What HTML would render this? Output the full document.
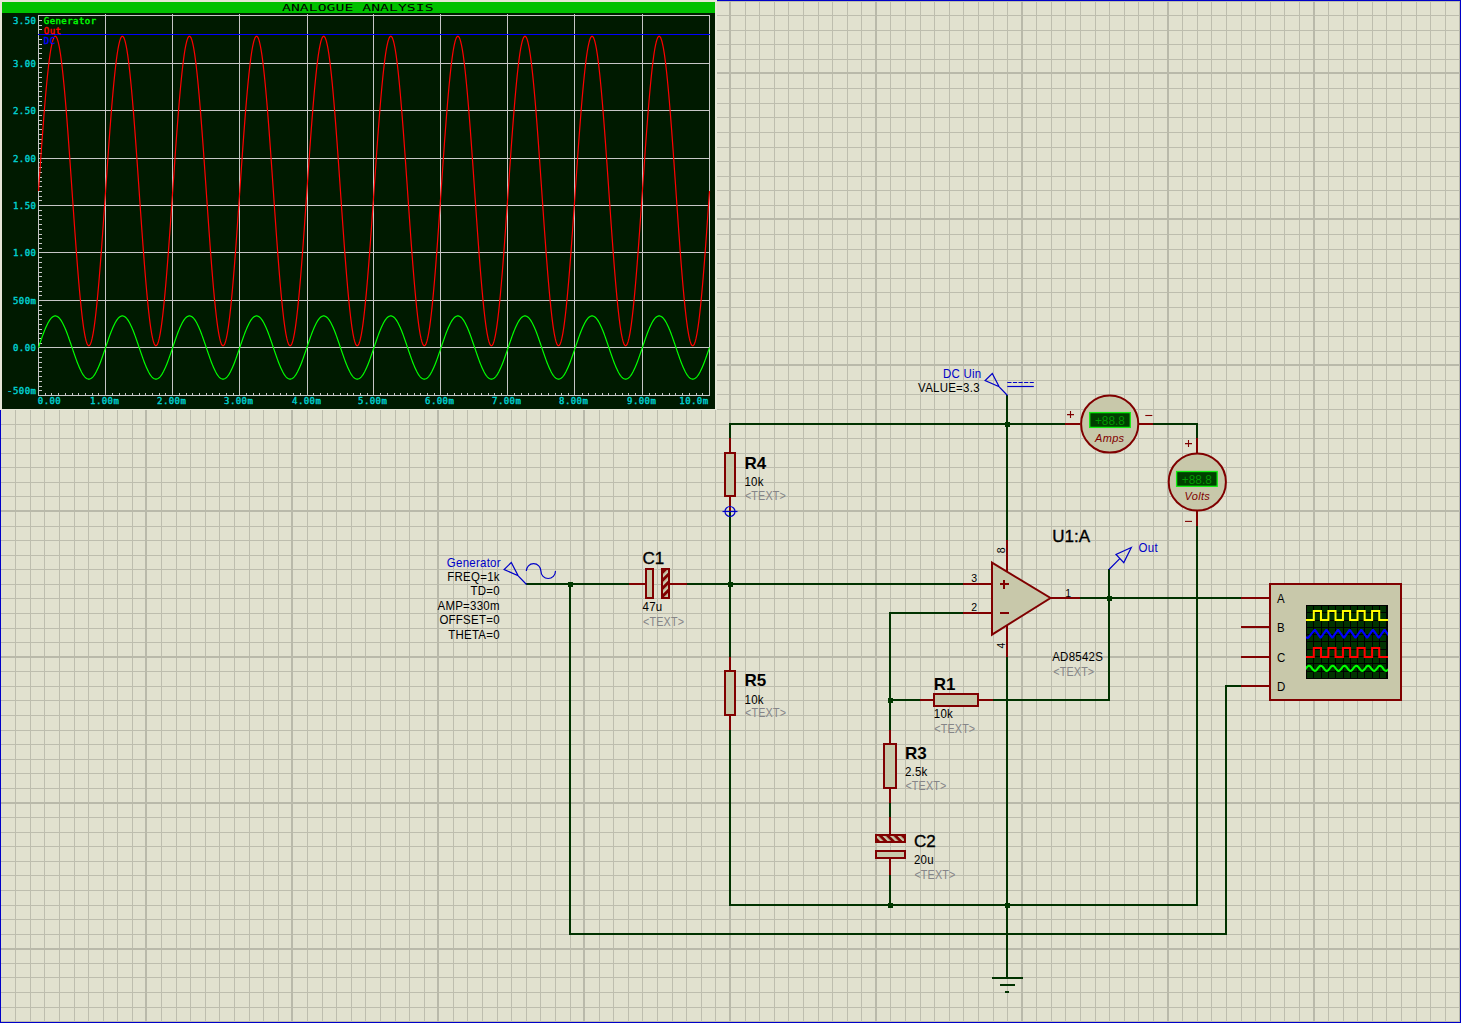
<!DOCTYPE html>
<html lang="en"><head><meta charset="utf-8"><title>Schematic - Analogue Analysis</title>
<style>html,body{margin:0;padding:0;background:#e1e1cf;overflow:hidden}svg{display:block}
text{font-family:"Liberation Sans","DejaVu Sans",sans-serif;font-size:12.6px;letter-spacing:0.27px;fill:#000}
.m{font-family:"DejaVu Sans Mono","Liberation Mono",monospace;font-size:9px;letter-spacing:0.44px;stroke-width:0.4px}
.ref{font-size:17px;letter-spacing:0;stroke:#000;stroke-width:0.35px}.rb{font-weight:bold;stroke:none}.tx{fill:#858588;font-size:12px;letter-spacing:0.15px}.bl{fill:#0000c8}
.w{stroke:#003200;stroke-width:2;fill:none;stroke-linecap:butt;stroke-linejoin:miter}.p{stroke:#800000;stroke-width:2;fill:none}
.b{stroke:#800000;stroke-width:2;fill:#c8c8aa}.pr{stroke:#0000c8;stroke-width:1.2;fill:none}
.pn{font-size:10.5px;letter-spacing:0}.mt{fill:#800000;font-style:italic;font-size:11px;letter-spacing:0.3px}
.cy{fill:#00d0d0;stroke:#00d0d0}
</style></head><body>
<svg width="1461" height="1023" viewBox="0 0 1461 1023">
<defs><pattern id="hatch" width="5.66" height="5.66" patternUnits="userSpaceOnUse" patternTransform="rotate(-45)"><rect width="5.66" height="5.66" fill="#c8c8aa"/><rect width="5.66" height="3" fill="#800000"/></pattern><pattern id="hatch2" width="5.3" height="5.3" patternUnits="userSpaceOnUse" patternTransform="translate(1.5 0) rotate(45)"><rect width="5.3" height="5.3" fill="#c8c8aa"/><rect width="5.3" height="2.9" fill="#800000"/></pattern></defs>
<rect width="1461" height="1023" fill="#e1e1cf"/>
<g shape-rendering="crispEdges">
<path d="M15.5 0V1023M30.5 0V1023M44.5 0V1023M59.5 0V1023M74.5 0V1023M88.5 0V1023M103.5 0V1023M117.5 0V1023M132.5 0V1023M161.5 0V1023M176.5 0V1023M190.5 0V1023M205.5 0V1023M219.5 0V1023M234.5 0V1023M249.5 0V1023M263.5 0V1023M278.5 0V1023M307.5 0V1023M322.5 0V1023M336.5 0V1023M351.5 0V1023M365.5 0V1023M380.5 0V1023M395.5 0V1023M409.5 0V1023M424.5 0V1023M453.5 0V1023M467.5 0V1023M482.5 0V1023M497.5 0V1023M511.5 0V1023M526.5 0V1023M540.5 0V1023M555.5 0V1023M570.5 0V1023M599.5 0V1023M613.5 0V1023M628.5 0V1023M642.5 0V1023M657.5 0V1023M672.5 0V1023M686.5 0V1023M701.5 0V1023M715.5 0V1023M745.5 0V1023M759.5 0V1023M774.5 0V1023M788.5 0V1023M803.5 0V1023M818.5 0V1023M832.5 0V1023M847.5 0V1023M861.5 0V1023M890.5 0V1023M905.5 0V1023M920.5 0V1023M934.5 0V1023M949.5 0V1023M963.5 0V1023M978.5 0V1023M993.5 0V1023M1007.5 0V1023M1036.5 0V1023M1051.5 0V1023M1065.5 0V1023M1080.5 0V1023M1095.5 0V1023M1109.5 0V1023M1124.5 0V1023M1138.5 0V1023M1153.5 0V1023M1182.5 0V1023M1197.5 0V1023M1211.5 0V1023M1226.5 0V1023M1241.5 0V1023M1255.5 0V1023M1270.5 0V1023M1284.5 0V1023M1299.5 0V1023M1328.5 0V1023M1343.5 0V1023M1357.5 0V1023M1372.5 0V1023M1386.5 0V1023M1401.5 0V1023M1416.5 0V1023M1430.5 0V1023M1445.5 0V1023M0 1.5H1461M0 15.5H1461M0 30.5H1461M0 44.5H1461M0 59.5H1461M0 88.5H1461M0 103.5H1461M0 117.5H1461M0 132.5H1461M0 147.5H1461M0 161.5H1461M0 176.5H1461M0 190.5H1461M0 205.5H1461M0 234.5H1461M0 249.5H1461M0 263.5H1461M0 278.5H1461M0 292.5H1461M0 307.5H1461M0 321.5H1461M0 336.5H1461M0 351.5H1461M0 380.5H1461M0 394.5H1461M0 409.5H1461M0 424.5H1461M0 438.5H1461M0 453.5H1461M0 467.5H1461M0 482.5H1461M0 496.5H1461M0 526.5H1461M0 540.5H1461M0 555.5H1461M0 569.5H1461M0 584.5H1461M0 598.5H1461M0 613.5H1461M0 628.5H1461M0 642.5H1461M0 671.5H1461M0 686.5H1461M0 700.5H1461M0 715.5H1461M0 730.5H1461M0 744.5H1461M0 759.5H1461M0 773.5H1461M0 788.5H1461M0 817.5H1461M0 832.5H1461M0 846.5H1461M0 861.5H1461M0 875.5H1461M0 890.5H1461M0 905.5H1461M0 919.5H1461M0 934.5H1461M0 963.5H1461M0 977.5H1461M0 992.5H1461M0 1007.5H1461M0 1021.5H1461" stroke="#bdbdae" stroke-width="1" fill="none"/>
<path d="M0 0V1023M146 0V1023M292 0V1023M438 0V1023M584 0V1023M730 0V1023M876 0V1023M1022 0V1023M1168 0V1023M1314 0V1023M1460 0V1023M0 73H1461M0 219H1461M0 365H1461M0 511H1461M0 657H1461M0 803H1461M0 949H1461" stroke="#b9b9aa" stroke-width="2" fill="none"/>
<path d="M0.5 0V1022.5H1460.5V0.5H0" stroke="#0000c8" stroke-width="1" fill="none"/>
</g>
<g id="graph">
<g shape-rendering="crispEdges">
<rect x="0" y="0" width="717" height="410" fill="#e6e6d8"/>
<rect x="2" y="2" width="713" height="407" fill="#001a00"/>
<rect x="2" y="2" width="713" height="11" fill="#00c000"/>
<path d="M38.5 15V396M105.5 14V396M172.5 14V396M239.5 14V396M307.5 14V396M373.5 14V396M440.5 14V396M507.5 14V396M574.5 14V396M642.5 14V396M709.5 15V396M38 15.5H710M38 63.5H710M38 110.5H710M38 158.5H710M38 205.5H710M38 252.5H710M38 300.5H710M38 347.5H710M38 395.5H710M45.5 395v-2.5M51.5 395v-2.5M58.5 395v-2.5M65.5 395v-2.5M72.5 395v-2.5M78.5 395v-2.5M85.5 395v-2.5M92.5 395v-2.5M98.5 395v-2.5M112.5 395v-2.5M119.5 395v-2.5M125.5 395v-2.5M132.5 395v-2.5M139.5 395v-2.5M145.5 395v-2.5M152.5 395v-2.5M159.5 395v-2.5M165.5 395v-2.5M179.5 395v-2.5M186.5 395v-2.5M192.5 395v-2.5M199.5 395v-2.5M206.5 395v-2.5M212.5 395v-2.5M219.5 395v-2.5M226.5 395v-2.5M233.5 395v-2.5M246.5 395v-2.5M253.5 395v-2.5M259.5 395v-2.5M266.5 395v-2.5M273.5 395v-2.5M280.5 395v-2.5M286.5 395v-2.5M293.5 395v-2.5M300.5 395v-2.5M313.5 395v-2.5M320.5 395v-2.5M327.5 395v-2.5M333.5 395v-2.5M340.5 395v-2.5M347.5 395v-2.5M353.5 395v-2.5M360.5 395v-2.5M367.5 395v-2.5M380.5 395v-2.5M387.5 395v-2.5M394.5 395v-2.5M400.5 395v-2.5M407.5 395v-2.5M414.5 395v-2.5M420.5 395v-2.5M427.5 395v-2.5M434.5 395v-2.5M447.5 395v-2.5M454.5 395v-2.5M461.5 395v-2.5M467.5 395v-2.5M474.5 395v-2.5M481.5 395v-2.5M488.5 395v-2.5M494.5 395v-2.5M501.5 395v-2.5M514.5 395v-2.5M521.5 395v-2.5M528.5 395v-2.5M535.5 395v-2.5M541.5 395v-2.5M548.5 395v-2.5M555.5 395v-2.5M561.5 395v-2.5M568.5 395v-2.5M582.5 395v-2.5M588.5 395v-2.5M595.5 395v-2.5M602.5 395v-2.5M608.5 395v-2.5M615.5 395v-2.5M622.5 395v-2.5M628.5 395v-2.5M635.5 395v-2.5M649.5 395v-2.5M655.5 395v-2.5M662.5 395v-2.5M669.5 395v-2.5M675.5 395v-2.5M682.5 395v-2.5M689.5 395v-2.5M696.5 395v-2.5M702.5 395v-2.5M39 20.5h2.5M39 25.5h2.5M39 29.5h2.5M39 34.5h2.5M39 39.5h2.5M39 44.5h2.5M39 48.5h2.5M39 53.5h2.5M39 58.5h2.5M39 67.5h2.5M39 72.5h2.5M39 77.5h2.5M39 82.5h2.5M39 86.5h2.5M39 91.5h2.5M39 96.5h2.5M39 101.5h2.5M39 105.5h2.5M39 115.5h2.5M39 120.5h2.5M39 124.5h2.5M39 129.5h2.5M39 134.5h2.5M39 139.5h2.5M39 143.5h2.5M39 148.5h2.5M39 153.5h2.5M39 162.5h2.5M39 167.5h2.5M39 172.5h2.5M39 177.5h2.5M39 181.5h2.5M39 186.5h2.5M39 191.5h2.5M39 196.5h2.5M39 200.5h2.5M39 210.5h2.5M39 215.5h2.5M39 219.5h2.5M39 224.5h2.5M39 229.5h2.5M39 234.5h2.5M39 238.5h2.5M39 243.5h2.5M39 248.5h2.5M39 257.5h2.5M39 262.5h2.5M39 267.5h2.5M39 272.5h2.5M39 276.5h2.5M39 281.5h2.5M39 286.5h2.5M39 291.5h2.5M39 295.5h2.5M39 305.5h2.5M39 310.5h2.5M39 314.5h2.5M39 319.5h2.5M39 324.5h2.5M39 329.5h2.5M39 333.5h2.5M39 338.5h2.5M39 343.5h2.5M39 352.5h2.5M39 357.5h2.5M39 362.5h2.5M39 367.5h2.5M39 371.5h2.5M39 376.5h2.5M39 381.5h2.5M39 386.5h2.5M39 390.5h2.5" stroke="#c6c6c6" stroke-width="1" fill="none"/>
</g>
<polyline points="38.5,347.5 38.98,346.08 39.46,344.67 39.94,343.26 40.42,341.86 40.9,340.47 41.38,339.1 41.85,337.74 42.33,336.4 42.81,335.09 43.29,333.8 43.77,332.53 44.25,331.3 44.73,330.1 45.21,328.93 45.69,327.81 46.17,326.72 46.65,325.67 47.13,324.67 47.61,323.71 48.09,322.81 48.56,321.95 49.04,321.14 49.52,320.39 50,319.69 50.48,319.04 50.96,318.46 51.44,317.93 51.92,317.46 52.4,317.05 52.88,316.71 53.36,316.42 53.84,316.2 54.32,316.04 54.8,315.95 55.27,315.91 55.75,315.95 56.23,316.04 56.71,316.2 57.19,316.42 57.67,316.71 58.15,317.05 58.63,317.46 59.11,317.93 59.59,318.46 60.07,319.04 60.55,319.69 61.03,320.39 61.51,321.14 61.98,321.95 62.46,322.81 62.94,323.71 63.42,324.67 63.9,325.67 64.38,326.72 64.86,327.81 65.34,328.93 65.82,330.1 66.3,331.3 66.78,332.53 67.26,333.8 67.74,335.09 68.22,336.4 68.69,337.74 69.17,339.1 69.65,340.47 70.13,341.86 70.61,343.26 71.09,344.67 71.57,346.08 72.05,347.5 72.53,348.92 73.01,350.33 73.49,351.74 73.97,353.14 74.45,354.53 74.93,355.9 75.41,357.26 75.88,358.6 76.36,359.91 76.84,361.2 77.32,362.47 77.8,363.7 78.28,364.9 78.76,366.07 79.24,367.19 79.72,368.28 80.2,369.33 80.68,370.33 81.16,371.29 81.64,372.19 82.11,373.05 82.59,373.86 83.07,374.61 83.55,375.31 84.03,375.96 84.51,376.54 84.99,377.07 85.47,377.54 85.95,377.95 86.43,378.29 86.91,378.58 87.39,378.8 87.87,378.96 88.35,379.05 88.82,379.09 89.3,379.05 89.78,378.96 90.26,378.8 90.74,378.58 91.22,378.29 91.7,377.95 92.18,377.54 92.66,377.07 93.14,376.54 93.62,375.96 94.1,375.31 94.58,374.61 95.06,373.86 95.53,373.05 96.01,372.19 96.49,371.29 96.97,370.33 97.45,369.33 97.93,368.28 98.41,367.19 98.89,366.07 99.37,364.9 99.85,363.7 100.33,362.47 100.81,361.2 101.29,359.91 101.77,358.6 102.24,357.26 102.72,355.9 103.2,354.53 103.68,353.14 104.16,351.74 104.64,350.33 105.12,348.92 105.6,347.5 106.08,346.08 106.56,344.67 107.04,343.26 107.52,341.86 108,340.47 108.48,339.1 108.95,337.74 109.43,336.4 109.91,335.09 110.39,333.8 110.87,332.53 111.35,331.3 111.83,330.1 112.31,328.93 112.79,327.81 113.27,326.72 113.75,325.67 114.23,324.67 114.71,323.71 115.19,322.81 115.66,321.95 116.14,321.14 116.62,320.39 117.1,319.69 117.58,319.04 118.06,318.46 118.54,317.93 119.02,317.46 119.5,317.05 119.98,316.71 120.46,316.42 120.94,316.2 121.42,316.04 121.9,315.95 122.38,315.91 122.85,315.95 123.33,316.04 123.81,316.2 124.29,316.42 124.77,316.71 125.25,317.05 125.73,317.46 126.21,317.93 126.69,318.46 127.17,319.04 127.65,319.69 128.13,320.39 128.61,321.14 129.08,321.95 129.56,322.81 130.04,323.71 130.52,324.67 131,325.67 131.48,326.72 131.96,327.81 132.44,328.93 132.92,330.1 133.4,331.3 133.88,332.53 134.36,333.8 134.84,335.09 135.32,336.4 135.79,337.74 136.27,339.1 136.75,340.47 137.23,341.86 137.71,343.26 138.19,344.67 138.67,346.08 139.15,347.5 139.63,348.92 140.11,350.33 140.59,351.74 141.07,353.14 141.55,354.53 142.03,355.9 142.5,357.26 142.98,358.6 143.46,359.91 143.94,361.2 144.42,362.47 144.9,363.7 145.38,364.9 145.86,366.07 146.34,367.19 146.82,368.28 147.3,369.33 147.78,370.33 148.26,371.29 148.74,372.19 149.21,373.05 149.69,373.86 150.17,374.61 150.65,375.31 151.13,375.96 151.61,376.54 152.09,377.07 152.57,377.54 153.05,377.95 153.53,378.29 154.01,378.58 154.49,378.8 154.97,378.96 155.45,379.05 155.92,379.09 156.4,379.05 156.88,378.96 157.36,378.8 157.84,378.58 158.32,378.29 158.8,377.95 159.28,377.54 159.76,377.07 160.24,376.54 160.72,375.96 161.2,375.31 161.68,374.61 162.16,373.86 162.63,373.05 163.11,372.19 163.59,371.29 164.07,370.33 164.55,369.33 165.03,368.28 165.51,367.19 165.99,366.07 166.47,364.9 166.95,363.7 167.43,362.47 167.91,361.2 168.39,359.91 168.87,358.6 169.34,357.26 169.82,355.9 170.3,354.53 170.78,353.14 171.26,351.74 171.74,350.33 172.22,348.92 172.7,347.5 173.18,346.08 173.66,344.67 174.14,343.26 174.62,341.86 175.1,340.47 175.58,339.1 176.05,337.74 176.53,336.4 177.01,335.09 177.49,333.8 177.97,332.53 178.45,331.3 178.93,330.1 179.41,328.93 179.89,327.81 180.37,326.72 180.85,325.67 181.33,324.67 181.81,323.71 182.29,322.81 182.76,321.95 183.24,321.14 183.72,320.39 184.2,319.69 184.68,319.04 185.16,318.46 185.64,317.93 186.12,317.46 186.6,317.05 187.08,316.71 187.56,316.42 188.04,316.2 188.52,316.04 189,315.95 189.47,315.91 189.95,315.95 190.43,316.04 190.91,316.2 191.39,316.42 191.87,316.71 192.35,317.05 192.83,317.46 193.31,317.93 193.79,318.46 194.27,319.04 194.75,319.69 195.23,320.39 195.71,321.14 196.19,321.95 196.66,322.81 197.14,323.71 197.62,324.67 198.1,325.67 198.58,326.72 199.06,327.81 199.54,328.93 200.02,330.1 200.5,331.3 200.98,332.53 201.46,333.8 201.94,335.09 202.42,336.4 202.9,337.74 203.37,339.1 203.85,340.47 204.33,341.86 204.81,343.26 205.29,344.67 205.77,346.08 206.25,347.5 206.73,348.92 207.21,350.33 207.69,351.74 208.17,353.14 208.65,354.53 209.13,355.9 209.6,357.26 210.08,358.6 210.56,359.91 211.04,361.2 211.52,362.47 212,363.7 212.48,364.9 212.96,366.07 213.44,367.19 213.92,368.28 214.4,369.33 214.88,370.33 215.36,371.29 215.84,372.19 216.31,373.05 216.79,373.86 217.27,374.61 217.75,375.31 218.23,375.96 218.71,376.54 219.19,377.07 219.67,377.54 220.15,377.95 220.63,378.29 221.11,378.58 221.59,378.8 222.07,378.96 222.55,379.05 223.02,379.09 223.5,379.05 223.98,378.96 224.46,378.8 224.94,378.58 225.42,378.29 225.9,377.95 226.38,377.54 226.86,377.07 227.34,376.54 227.82,375.96 228.3,375.31 228.78,374.61 229.26,373.86 229.73,373.05 230.21,372.19 230.69,371.29 231.17,370.33 231.65,369.33 232.13,368.28 232.61,367.19 233.09,366.07 233.57,364.9 234.05,363.7 234.53,362.47 235.01,361.2 235.49,359.91 235.97,358.6 236.44,357.26 236.92,355.9 237.4,354.53 237.88,353.14 238.36,351.74 238.84,350.33 239.32,348.92 239.8,347.5 240.28,346.08 240.76,344.67 241.24,343.26 241.72,341.86 242.2,340.47 242.68,339.1 243.15,337.74 243.63,336.4 244.11,335.09 244.59,333.8 245.07,332.53 245.55,331.3 246.03,330.1 246.51,328.93 246.99,327.81 247.47,326.72 247.95,325.67 248.43,324.67 248.91,323.71 249.39,322.81 249.86,321.95 250.34,321.14 250.82,320.39 251.3,319.69 251.78,319.04 252.26,318.46 252.74,317.93 253.22,317.46 253.7,317.05 254.18,316.71 254.66,316.42 255.14,316.2 255.62,316.04 256.1,315.95 256.57,315.91 257.05,315.95 257.53,316.04 258.01,316.2 258.49,316.42 258.97,316.71 259.45,317.05 259.93,317.46 260.41,317.93 260.89,318.46 261.37,319.04 261.85,319.69 262.33,320.39 262.81,321.14 263.28,321.95 263.76,322.81 264.24,323.71 264.72,324.67 265.2,325.67 265.68,326.72 266.16,327.81 266.64,328.93 267.12,330.1 267.6,331.3 268.08,332.53 268.56,333.8 269.04,335.09 269.52,336.4 270,337.74 270.47,339.1 270.95,340.47 271.43,341.86 271.91,343.26 272.39,344.67 272.87,346.08 273.35,347.5 273.83,348.92 274.31,350.33 274.79,351.74 275.27,353.14 275.75,354.53 276.23,355.9 276.7,357.26 277.18,358.6 277.66,359.91 278.14,361.2 278.62,362.47 279.1,363.7 279.58,364.9 280.06,366.07 280.54,367.19 281.02,368.28 281.5,369.33 281.98,370.33 282.46,371.29 282.94,372.19 283.41,373.05 283.89,373.86 284.37,374.61 284.85,375.31 285.33,375.96 285.81,376.54 286.29,377.07 286.77,377.54 287.25,377.95 287.73,378.29 288.21,378.58 288.69,378.8 289.17,378.96 289.65,379.05 290.12,379.09 290.6,379.05 291.08,378.96 291.56,378.8 292.04,378.58 292.52,378.29 293,377.95 293.48,377.54 293.96,377.07 294.44,376.54 294.92,375.96 295.4,375.31 295.88,374.61 296.36,373.86 296.83,373.05 297.31,372.19 297.79,371.29 298.27,370.33 298.75,369.33 299.23,368.28 299.71,367.19 300.19,366.07 300.67,364.9 301.15,363.7 301.63,362.47 302.11,361.2 302.59,359.91 303.07,358.6 303.55,357.26 304.02,355.9 304.5,354.53 304.98,353.14 305.46,351.74 305.94,350.33 306.42,348.92 306.9,347.5 307.38,346.08 307.86,344.67 308.34,343.26 308.82,341.86 309.3,340.47 309.78,339.1 310.25,337.74 310.73,336.4 311.21,335.09 311.69,333.8 312.17,332.53 312.65,331.3 313.13,330.1 313.61,328.93 314.09,327.81 314.57,326.72 315.05,325.67 315.53,324.67 316.01,323.71 316.49,322.81 316.96,321.95 317.44,321.14 317.92,320.39 318.4,319.69 318.88,319.04 319.36,318.46 319.84,317.93 320.32,317.46 320.8,317.05 321.28,316.71 321.76,316.42 322.24,316.2 322.72,316.04 323.2,315.95 323.67,315.91 324.15,315.95 324.63,316.04 325.11,316.2 325.59,316.42 326.07,316.71 326.55,317.05 327.03,317.46 327.51,317.93 327.99,318.46 328.47,319.04 328.95,319.69 329.43,320.39 329.91,321.14 330.38,321.95 330.86,322.81 331.34,323.71 331.82,324.67 332.3,325.67 332.78,326.72 333.26,327.81 333.74,328.93 334.22,330.1 334.7,331.3 335.18,332.53 335.66,333.8 336.14,335.09 336.62,336.4 337.09,337.74 337.57,339.1 338.05,340.47 338.53,341.86 339.01,343.26 339.49,344.67 339.97,346.08 340.45,347.5 340.93,348.92 341.41,350.33 341.89,351.74 342.37,353.14 342.85,354.53 343.33,355.9 343.8,357.26 344.28,358.6 344.76,359.91 345.24,361.2 345.72,362.47 346.2,363.7 346.68,364.9 347.16,366.07 347.64,367.19 348.12,368.28 348.6,369.33 349.08,370.33 349.56,371.29 350.04,372.19 350.51,373.05 350.99,373.86 351.47,374.61 351.95,375.31 352.43,375.96 352.91,376.54 353.39,377.07 353.87,377.54 354.35,377.95 354.83,378.29 355.31,378.58 355.79,378.8 356.27,378.96 356.75,379.05 357.22,379.09 357.7,379.05 358.18,378.96 358.66,378.8 359.14,378.58 359.62,378.29 360.1,377.95 360.58,377.54 361.06,377.07 361.54,376.54 362.02,375.96 362.5,375.31 362.98,374.61 363.46,373.86 363.93,373.05 364.41,372.19 364.89,371.29 365.37,370.33 365.85,369.33 366.33,368.28 366.81,367.19 367.29,366.07 367.77,364.9 368.25,363.7 368.73,362.47 369.21,361.2 369.69,359.91 370.17,358.6 370.64,357.26 371.12,355.9 371.6,354.53 372.08,353.14 372.56,351.74 373.04,350.33 373.52,348.92 374,347.5 374.48,346.08 374.96,344.67 375.44,343.26 375.92,341.86 376.4,340.47 376.88,339.1 377.35,337.74 377.83,336.4 378.31,335.09 378.79,333.8 379.27,332.53 379.75,331.3 380.23,330.1 380.71,328.93 381.19,327.81 381.67,326.72 382.15,325.67 382.63,324.67 383.11,323.71 383.59,322.81 384.06,321.95 384.54,321.14 385.02,320.39 385.5,319.69 385.98,319.04 386.46,318.46 386.94,317.93 387.42,317.46 387.9,317.05 388.38,316.71 388.86,316.42 389.34,316.2 389.82,316.04 390.3,315.95 390.77,315.91 391.25,315.95 391.73,316.04 392.21,316.2 392.69,316.42 393.17,316.71 393.65,317.05 394.13,317.46 394.61,317.93 395.09,318.46 395.57,319.04 396.05,319.69 396.53,320.39 397.01,321.14 397.48,321.95 397.96,322.81 398.44,323.71 398.92,324.67 399.4,325.67 399.88,326.72 400.36,327.81 400.84,328.93 401.32,330.1 401.8,331.3 402.28,332.53 402.76,333.8 403.24,335.09 403.72,336.4 404.19,337.74 404.67,339.1 405.15,340.47 405.63,341.86 406.11,343.26 406.59,344.67 407.07,346.08 407.55,347.5 408.03,348.92 408.51,350.33 408.99,351.74 409.47,353.14 409.95,354.53 410.43,355.9 410.9,357.26 411.38,358.6 411.86,359.91 412.34,361.2 412.82,362.47 413.3,363.7 413.78,364.9 414.26,366.07 414.74,367.19 415.22,368.28 415.7,369.33 416.18,370.33 416.66,371.29 417.14,372.19 417.62,373.05 418.09,373.86 418.57,374.61 419.05,375.31 419.53,375.96 420.01,376.54 420.49,377.07 420.97,377.54 421.45,377.95 421.93,378.29 422.41,378.58 422.89,378.8 423.37,378.96 423.85,379.05 424.32,379.09 424.8,379.05 425.28,378.96 425.76,378.8 426.24,378.58 426.72,378.29 427.2,377.95 427.68,377.54 428.16,377.07 428.64,376.54 429.12,375.96 429.6,375.31 430.08,374.61 430.56,373.86 431.03,373.05 431.51,372.19 431.99,371.29 432.47,370.33 432.95,369.33 433.43,368.28 433.91,367.19 434.39,366.07 434.87,364.9 435.35,363.7 435.83,362.47 436.31,361.2 436.79,359.91 437.27,358.6 437.75,357.26 438.22,355.9 438.7,354.53 439.18,353.14 439.66,351.74 440.14,350.33 440.62,348.92 441.1,347.5 441.58,346.08 442.06,344.67 442.54,343.26 443.02,341.86 443.5,340.47 443.98,339.1 444.45,337.74 444.93,336.4 445.41,335.09 445.89,333.8 446.37,332.53 446.85,331.3 447.33,330.1 447.81,328.93 448.29,327.81 448.77,326.72 449.25,325.67 449.73,324.67 450.21,323.71 450.69,322.81 451.16,321.95 451.64,321.14 452.12,320.39 452.6,319.69 453.08,319.04 453.56,318.46 454.04,317.93 454.52,317.46 455,317.05 455.48,316.71 455.96,316.42 456.44,316.2 456.92,316.04 457.4,315.95 457.87,315.91 458.35,315.95 458.83,316.04 459.31,316.2 459.79,316.42 460.27,316.71 460.75,317.05 461.23,317.46 461.71,317.93 462.19,318.46 462.67,319.04 463.15,319.69 463.63,320.39 464.11,321.14 464.58,321.95 465.06,322.81 465.54,323.71 466.02,324.67 466.5,325.67 466.98,326.72 467.46,327.81 467.94,328.93 468.42,330.1 468.9,331.3 469.38,332.53 469.86,333.8 470.34,335.09 470.82,336.4 471.29,337.74 471.77,339.1 472.25,340.47 472.73,341.86 473.21,343.26 473.69,344.67 474.17,346.08 474.65,347.5 475.13,348.92 475.61,350.33 476.09,351.74 476.57,353.14 477.05,354.53 477.53,355.9 478,357.26 478.48,358.6 478.96,359.91 479.44,361.2 479.92,362.47 480.4,363.7 480.88,364.9 481.36,366.07 481.84,367.19 482.32,368.28 482.8,369.33 483.28,370.33 483.76,371.29 484.24,372.19 484.71,373.05 485.19,373.86 485.67,374.61 486.15,375.31 486.63,375.96 487.11,376.54 487.59,377.07 488.07,377.54 488.55,377.95 489.03,378.29 489.51,378.58 489.99,378.8 490.47,378.96 490.95,379.05 491.42,379.09 491.9,379.05 492.38,378.96 492.86,378.8 493.34,378.58 493.82,378.29 494.3,377.95 494.78,377.54 495.26,377.07 495.74,376.54 496.22,375.96 496.7,375.31 497.18,374.61 497.66,373.86 498.13,373.05 498.61,372.19 499.09,371.29 499.57,370.33 500.05,369.33 500.53,368.28 501.01,367.19 501.49,366.07 501.97,364.9 502.45,363.7 502.93,362.47 503.41,361.2 503.89,359.91 504.37,358.6 504.84,357.26 505.32,355.9 505.8,354.53 506.28,353.14 506.76,351.74 507.24,350.33 507.72,348.92 508.2,347.5 508.68,346.08 509.16,344.67 509.64,343.26 510.12,341.86 510.6,340.47 511.08,339.1 511.55,337.74 512.03,336.4 512.51,335.09 512.99,333.8 513.47,332.53 513.95,331.3 514.43,330.1 514.91,328.93 515.39,327.81 515.87,326.72 516.35,325.67 516.83,324.67 517.31,323.71 517.79,322.81 518.26,321.95 518.74,321.14 519.22,320.39 519.7,319.69 520.18,319.04 520.66,318.46 521.14,317.93 521.62,317.46 522.1,317.05 522.58,316.71 523.06,316.42 523.54,316.2 524.02,316.04 524.5,315.95 524.97,315.91 525.45,315.95 525.93,316.04 526.41,316.2 526.89,316.42 527.37,316.71 527.85,317.05 528.33,317.46 528.81,317.93 529.29,318.46 529.77,319.04 530.25,319.69 530.73,320.39 531.21,321.14 531.68,321.95 532.16,322.81 532.64,323.71 533.12,324.67 533.6,325.67 534.08,326.72 534.56,327.81 535.04,328.93 535.52,330.1 536,331.3 536.48,332.53 536.96,333.8 537.44,335.09 537.92,336.4 538.39,337.74 538.87,339.1 539.35,340.47 539.83,341.86 540.31,343.26 540.79,344.67 541.27,346.08 541.75,347.5 542.23,348.92 542.71,350.33 543.19,351.74 543.67,353.14 544.15,354.53 544.63,355.9 545.11,357.26 545.58,358.6 546.06,359.91 546.54,361.2 547.02,362.47 547.5,363.7 547.98,364.9 548.46,366.07 548.94,367.19 549.42,368.28 549.9,369.33 550.38,370.33 550.86,371.29 551.34,372.19 551.81,373.05 552.29,373.86 552.77,374.61 553.25,375.31 553.73,375.96 554.21,376.54 554.69,377.07 555.17,377.54 555.65,377.95 556.13,378.29 556.61,378.58 557.09,378.8 557.57,378.96 558.05,379.05 558.52,379.09 559,379.05 559.48,378.96 559.96,378.8 560.44,378.58 560.92,378.29 561.4,377.95 561.88,377.54 562.36,377.07 562.84,376.54 563.32,375.96 563.8,375.31 564.28,374.61 564.76,373.86 565.23,373.05 565.71,372.19 566.19,371.29 566.67,370.33 567.15,369.33 567.63,368.28 568.11,367.19 568.59,366.07 569.07,364.9 569.55,363.7 570.03,362.47 570.51,361.2 570.99,359.91 571.47,358.6 571.94,357.26 572.42,355.9 572.9,354.53 573.38,353.14 573.86,351.74 574.34,350.33 574.82,348.92 575.3,347.5 575.78,346.08 576.26,344.67 576.74,343.26 577.22,341.86 577.7,340.47 578.18,339.1 578.65,337.74 579.13,336.4 579.61,335.09 580.09,333.8 580.57,332.53 581.05,331.3 581.53,330.1 582.01,328.93 582.49,327.81 582.97,326.72 583.45,325.67 583.93,324.67 584.41,323.71 584.89,322.81 585.37,321.95 585.84,321.14 586.32,320.39 586.8,319.69 587.28,319.04 587.76,318.46 588.24,317.93 588.72,317.46 589.2,317.05 589.68,316.71 590.16,316.42 590.64,316.2 591.12,316.04 591.6,315.95 592.07,315.91 592.55,315.95 593.03,316.04 593.51,316.2 593.99,316.42 594.47,316.71 594.95,317.05 595.43,317.46 595.91,317.93 596.39,318.46 596.87,319.04 597.35,319.69 597.83,320.39 598.31,321.14 598.78,321.95 599.26,322.81 599.74,323.71 600.22,324.67 600.7,325.67 601.18,326.72 601.66,327.81 602.14,328.93 602.62,330.1 603.1,331.3 603.58,332.53 604.06,333.8 604.54,335.09 605.02,336.4 605.49,337.74 605.97,339.1 606.45,340.47 606.93,341.86 607.41,343.26 607.89,344.67 608.37,346.08 608.85,347.5 609.33,348.92 609.81,350.33 610.29,351.74 610.77,353.14 611.25,354.53 611.73,355.9 612.21,357.26 612.68,358.6 613.16,359.91 613.64,361.2 614.12,362.47 614.6,363.7 615.08,364.9 615.56,366.07 616.04,367.19 616.52,368.28 617,369.33 617.48,370.33 617.96,371.29 618.44,372.19 618.91,373.05 619.39,373.86 619.87,374.61 620.35,375.31 620.83,375.96 621.31,376.54 621.79,377.07 622.27,377.54 622.75,377.95 623.23,378.29 623.71,378.58 624.19,378.8 624.67,378.96 625.15,379.05 625.62,379.09 626.1,379.05 626.58,378.96 627.06,378.8 627.54,378.58 628.02,378.29 628.5,377.95 628.98,377.54 629.46,377.07 629.94,376.54 630.42,375.96 630.9,375.31 631.38,374.61 631.86,373.86 632.33,373.05 632.81,372.19 633.29,371.29 633.77,370.33 634.25,369.33 634.73,368.28 635.21,367.19 635.69,366.07 636.17,364.9 636.65,363.7 637.13,362.47 637.61,361.2 638.09,359.91 638.57,358.6 639.04,357.26 639.52,355.9 640,354.53 640.48,353.14 640.96,351.74 641.44,350.33 641.92,348.92 642.4,347.5 642.88,346.08 643.36,344.67 643.84,343.26 644.32,341.86 644.8,340.47 645.28,339.1 645.75,337.74 646.23,336.4 646.71,335.09 647.19,333.8 647.67,332.53 648.15,331.3 648.63,330.1 649.11,328.93 649.59,327.81 650.07,326.72 650.55,325.67 651.03,324.67 651.51,323.71 651.99,322.81 652.46,321.95 652.94,321.14 653.42,320.39 653.9,319.69 654.38,319.04 654.86,318.46 655.34,317.93 655.82,317.46 656.3,317.05 656.78,316.71 657.26,316.42 657.74,316.2 658.22,316.04 658.7,315.95 659.17,315.91 659.65,315.95 660.13,316.04 660.61,316.2 661.09,316.42 661.57,316.71 662.05,317.05 662.53,317.46 663.01,317.93 663.49,318.46 663.97,319.04 664.45,319.69 664.93,320.39 665.41,321.14 665.88,321.95 666.36,322.81 666.84,323.71 667.32,324.67 667.8,325.67 668.28,326.72 668.76,327.81 669.24,328.93 669.72,330.1 670.2,331.3 670.68,332.53 671.16,333.8 671.64,335.09 672.12,336.4 672.59,337.74 673.07,339.1 673.55,340.47 674.03,341.86 674.51,343.26 674.99,344.67 675.47,346.08 675.95,347.5 676.43,348.92 676.91,350.33 677.39,351.74 677.87,353.14 678.35,354.53 678.83,355.9 679.3,357.26 679.78,358.6 680.26,359.91 680.74,361.2 681.22,362.47 681.7,363.7 682.18,364.9 682.66,366.07 683.14,367.19 683.62,368.28 684.1,369.33 684.58,370.33 685.06,371.29 685.54,372.19 686.01,373.05 686.49,373.86 686.97,374.61 687.45,375.31 687.93,375.96 688.41,376.54 688.89,377.07 689.37,377.54 689.85,377.95 690.33,378.29 690.81,378.58 691.29,378.8 691.77,378.96 692.25,379.05 692.72,379.09 693.2,379.05 693.68,378.96 694.16,378.8 694.64,378.58 695.12,378.29 695.6,377.95 696.08,377.54 696.56,377.07 697.04,376.54 697.52,375.96 698,375.31 698.48,374.61 698.96,373.86 699.43,373.05 699.91,372.19 700.39,371.29 700.87,370.33 701.35,369.33 701.83,368.28 702.31,367.19 702.79,366.07 703.27,364.9 703.75,363.7 704.23,362.47 704.71,361.2 705.19,359.91 705.67,358.6 706.14,357.26 706.62,355.9 707.1,354.53 707.58,353.14 708.06,351.74 708.54,350.33 709.02,348.92 709.5,347.5" stroke="#00ff00" stroke-width="1.2" fill="none" stroke-linejoin="round"/>
<polyline points="38.5,191 38.98,184.05 39.46,177.12 39.94,170.22 40.42,163.36 40.9,156.55 41.38,149.82 41.85,143.16 42.33,136.61 42.81,130.16 43.29,123.83 43.77,117.64 44.25,111.6 44.73,105.72 45.21,100.01 45.69,94.48 46.17,89.15 46.65,84.02 47.13,79.11 47.61,74.43 48.09,69.97 48.56,65.77 49.04,61.81 49.52,58.11 50,54.69 50.48,51.53 50.96,48.66 51.44,46.07 51.92,43.78 52.4,41.78 52.88,40.08 53.36,38.69 53.84,37.6 54.32,36.83 54.8,36.36 55.27,36.2 55.75,36.36 56.23,36.83 56.71,37.6 57.19,38.69 57.67,40.08 58.15,41.78 58.63,43.78 59.11,46.07 59.59,48.66 60.07,51.53 60.55,54.69 61.03,58.11 61.51,61.81 61.98,65.77 62.46,69.97 62.94,74.43 63.42,79.11 63.9,84.02 64.38,89.15 64.86,94.48 65.34,100.01 65.82,105.72 66.3,111.6 66.78,117.64 67.26,123.83 67.74,130.16 68.22,136.61 68.69,143.16 69.17,149.82 69.65,156.55 70.13,163.36 70.61,170.22 71.09,177.12 71.57,184.05 72.05,191 72.53,197.94 73.01,204.87 73.49,211.78 73.97,218.64 74.45,225.44 74.93,232.18 75.41,238.83 75.88,245.39 76.36,251.84 76.84,258.16 77.32,264.35 77.8,270.39 78.28,276.27 78.76,281.98 79.24,287.51 79.72,292.84 80.2,297.97 80.68,302.88 81.16,307.57 81.64,312.02 82.11,316.23 82.59,320.19 83.07,323.88 83.55,327.31 84.03,330.46 84.51,333.34 84.99,335.92 85.47,338.22 85.95,340.21 86.43,341.91 86.91,343.31 87.39,344.39 87.87,345.17 88.35,345.64 88.82,345.79 89.3,345.64 89.78,345.17 90.26,344.39 90.74,343.31 91.22,341.91 91.7,340.21 92.18,338.22 92.66,335.92 93.14,333.34 93.62,330.46 94.1,327.31 94.58,323.88 95.06,320.19 95.53,316.23 96.01,312.02 96.49,307.57 96.97,302.88 97.45,297.97 97.93,292.84 98.41,287.51 98.89,281.98 99.37,276.27 99.85,270.39 100.33,264.35 100.81,258.16 101.29,251.84 101.77,245.39 102.24,238.83 102.72,232.18 103.2,225.44 103.68,218.64 104.16,211.78 104.64,204.87 105.12,197.94 105.6,191 106.08,184.05 106.56,177.12 107.04,170.22 107.52,163.36 108,156.55 108.48,149.82 108.95,143.16 109.43,136.61 109.91,130.16 110.39,123.83 110.87,117.64 111.35,111.6 111.83,105.72 112.31,100.01 112.79,94.48 113.27,89.15 113.75,84.02 114.23,79.11 114.71,74.43 115.19,69.97 115.66,65.77 116.14,61.81 116.62,58.11 117.1,54.69 117.58,51.53 118.06,48.66 118.54,46.07 119.02,43.78 119.5,41.78 119.98,40.08 120.46,38.69 120.94,37.6 121.42,36.83 121.9,36.36 122.38,36.2 122.85,36.36 123.33,36.83 123.81,37.6 124.29,38.69 124.77,40.08 125.25,41.78 125.73,43.78 126.21,46.07 126.69,48.66 127.17,51.53 127.65,54.69 128.13,58.11 128.61,61.81 129.08,65.77 129.56,69.97 130.04,74.43 130.52,79.11 131,84.02 131.48,89.15 131.96,94.48 132.44,100.01 132.92,105.72 133.4,111.6 133.88,117.64 134.36,123.83 134.84,130.16 135.32,136.61 135.79,143.16 136.27,149.82 136.75,156.55 137.23,163.36 137.71,170.22 138.19,177.12 138.67,184.05 139.15,191 139.63,197.94 140.11,204.87 140.59,211.78 141.07,218.64 141.55,225.44 142.03,232.18 142.5,238.83 142.98,245.39 143.46,251.84 143.94,258.16 144.42,264.35 144.9,270.39 145.38,276.27 145.86,281.98 146.34,287.51 146.82,292.84 147.3,297.97 147.78,302.88 148.26,307.57 148.74,312.02 149.21,316.23 149.69,320.19 150.17,323.88 150.65,327.31 151.13,330.46 151.61,333.34 152.09,335.92 152.57,338.22 153.05,340.21 153.53,341.91 154.01,343.31 154.49,344.39 154.97,345.17 155.45,345.64 155.92,345.79 156.4,345.64 156.88,345.17 157.36,344.39 157.84,343.31 158.32,341.91 158.8,340.21 159.28,338.22 159.76,335.92 160.24,333.34 160.72,330.46 161.2,327.31 161.68,323.88 162.16,320.19 162.63,316.23 163.11,312.02 163.59,307.57 164.07,302.88 164.55,297.97 165.03,292.84 165.51,287.51 165.99,281.98 166.47,276.27 166.95,270.39 167.43,264.35 167.91,258.16 168.39,251.84 168.87,245.39 169.34,238.83 169.82,232.18 170.3,225.44 170.78,218.64 171.26,211.78 171.74,204.87 172.22,197.94 172.7,191 173.18,184.05 173.66,177.12 174.14,170.22 174.62,163.36 175.1,156.55 175.58,149.82 176.05,143.16 176.53,136.61 177.01,130.16 177.49,123.83 177.97,117.64 178.45,111.6 178.93,105.72 179.41,100.01 179.89,94.48 180.37,89.15 180.85,84.02 181.33,79.11 181.81,74.43 182.29,69.97 182.76,65.77 183.24,61.81 183.72,58.11 184.2,54.69 184.68,51.53 185.16,48.66 185.64,46.07 186.12,43.78 186.6,41.78 187.08,40.08 187.56,38.69 188.04,37.6 188.52,36.83 189,36.36 189.47,36.2 189.95,36.36 190.43,36.83 190.91,37.6 191.39,38.69 191.87,40.08 192.35,41.78 192.83,43.78 193.31,46.07 193.79,48.66 194.27,51.53 194.75,54.69 195.23,58.11 195.71,61.81 196.19,65.77 196.66,69.97 197.14,74.43 197.62,79.11 198.1,84.02 198.58,89.15 199.06,94.48 199.54,100.01 200.02,105.72 200.5,111.6 200.98,117.64 201.46,123.83 201.94,130.16 202.42,136.61 202.9,143.16 203.37,149.82 203.85,156.55 204.33,163.36 204.81,170.22 205.29,177.12 205.77,184.05 206.25,191 206.73,197.94 207.21,204.87 207.69,211.78 208.17,218.64 208.65,225.44 209.13,232.18 209.6,238.83 210.08,245.39 210.56,251.84 211.04,258.16 211.52,264.35 212,270.39 212.48,276.27 212.96,281.98 213.44,287.51 213.92,292.84 214.4,297.97 214.88,302.88 215.36,307.57 215.84,312.02 216.31,316.23 216.79,320.19 217.27,323.88 217.75,327.31 218.23,330.46 218.71,333.34 219.19,335.92 219.67,338.22 220.15,340.21 220.63,341.91 221.11,343.31 221.59,344.39 222.07,345.17 222.55,345.64 223.02,345.79 223.5,345.64 223.98,345.17 224.46,344.39 224.94,343.31 225.42,341.91 225.9,340.21 226.38,338.22 226.86,335.92 227.34,333.34 227.82,330.46 228.3,327.31 228.78,323.88 229.26,320.19 229.73,316.23 230.21,312.02 230.69,307.57 231.17,302.88 231.65,297.97 232.13,292.84 232.61,287.51 233.09,281.98 233.57,276.27 234.05,270.39 234.53,264.35 235.01,258.16 235.49,251.84 235.97,245.39 236.44,238.83 236.92,232.18 237.4,225.44 237.88,218.64 238.36,211.78 238.84,204.87 239.32,197.94 239.8,191 240.28,184.05 240.76,177.12 241.24,170.22 241.72,163.36 242.2,156.55 242.68,149.82 243.15,143.16 243.63,136.61 244.11,130.16 244.59,123.83 245.07,117.64 245.55,111.6 246.03,105.72 246.51,100.01 246.99,94.48 247.47,89.15 247.95,84.02 248.43,79.11 248.91,74.43 249.39,69.97 249.86,65.77 250.34,61.81 250.82,58.11 251.3,54.69 251.78,51.53 252.26,48.66 252.74,46.07 253.22,43.78 253.7,41.78 254.18,40.08 254.66,38.69 255.14,37.6 255.62,36.83 256.1,36.36 256.57,36.2 257.05,36.36 257.53,36.83 258.01,37.6 258.49,38.69 258.97,40.08 259.45,41.78 259.93,43.78 260.41,46.07 260.89,48.66 261.37,51.53 261.85,54.69 262.33,58.11 262.81,61.81 263.28,65.77 263.76,69.97 264.24,74.43 264.72,79.11 265.2,84.02 265.68,89.15 266.16,94.48 266.64,100.01 267.12,105.72 267.6,111.6 268.08,117.64 268.56,123.83 269.04,130.16 269.52,136.61 270,143.16 270.47,149.82 270.95,156.55 271.43,163.36 271.91,170.22 272.39,177.12 272.87,184.05 273.35,191 273.83,197.94 274.31,204.87 274.79,211.78 275.27,218.64 275.75,225.44 276.23,232.18 276.7,238.83 277.18,245.39 277.66,251.84 278.14,258.16 278.62,264.35 279.1,270.39 279.58,276.27 280.06,281.98 280.54,287.51 281.02,292.84 281.5,297.97 281.98,302.88 282.46,307.57 282.94,312.02 283.41,316.23 283.89,320.19 284.37,323.88 284.85,327.31 285.33,330.46 285.81,333.34 286.29,335.92 286.77,338.22 287.25,340.21 287.73,341.91 288.21,343.31 288.69,344.39 289.17,345.17 289.65,345.64 290.12,345.79 290.6,345.64 291.08,345.17 291.56,344.39 292.04,343.31 292.52,341.91 293,340.21 293.48,338.22 293.96,335.92 294.44,333.34 294.92,330.46 295.4,327.31 295.88,323.88 296.36,320.19 296.83,316.23 297.31,312.02 297.79,307.57 298.27,302.88 298.75,297.97 299.23,292.84 299.71,287.51 300.19,281.98 300.67,276.27 301.15,270.39 301.63,264.35 302.11,258.16 302.59,251.84 303.07,245.39 303.55,238.83 304.02,232.18 304.5,225.44 304.98,218.64 305.46,211.78 305.94,204.87 306.42,197.94 306.9,191 307.38,184.05 307.86,177.12 308.34,170.22 308.82,163.36 309.3,156.55 309.78,149.82 310.25,143.16 310.73,136.61 311.21,130.16 311.69,123.83 312.17,117.64 312.65,111.6 313.13,105.72 313.61,100.01 314.09,94.48 314.57,89.15 315.05,84.02 315.53,79.11 316.01,74.43 316.49,69.97 316.96,65.77 317.44,61.81 317.92,58.11 318.4,54.69 318.88,51.53 319.36,48.66 319.84,46.07 320.32,43.78 320.8,41.78 321.28,40.08 321.76,38.69 322.24,37.6 322.72,36.83 323.2,36.36 323.67,36.2 324.15,36.36 324.63,36.83 325.11,37.6 325.59,38.69 326.07,40.08 326.55,41.78 327.03,43.78 327.51,46.07 327.99,48.66 328.47,51.53 328.95,54.69 329.43,58.11 329.91,61.81 330.38,65.77 330.86,69.97 331.34,74.43 331.82,79.11 332.3,84.02 332.78,89.15 333.26,94.48 333.74,100.01 334.22,105.72 334.7,111.6 335.18,117.64 335.66,123.83 336.14,130.16 336.62,136.61 337.09,143.16 337.57,149.82 338.05,156.55 338.53,163.36 339.01,170.22 339.49,177.12 339.97,184.05 340.45,191 340.93,197.94 341.41,204.87 341.89,211.78 342.37,218.64 342.85,225.44 343.33,232.18 343.8,238.83 344.28,245.39 344.76,251.84 345.24,258.16 345.72,264.35 346.2,270.39 346.68,276.27 347.16,281.98 347.64,287.51 348.12,292.84 348.6,297.97 349.08,302.88 349.56,307.57 350.04,312.02 350.51,316.23 350.99,320.19 351.47,323.88 351.95,327.31 352.43,330.46 352.91,333.34 353.39,335.92 353.87,338.22 354.35,340.21 354.83,341.91 355.31,343.31 355.79,344.39 356.27,345.17 356.75,345.64 357.22,345.79 357.7,345.64 358.18,345.17 358.66,344.39 359.14,343.31 359.62,341.91 360.1,340.21 360.58,338.22 361.06,335.92 361.54,333.34 362.02,330.46 362.5,327.31 362.98,323.88 363.46,320.19 363.93,316.23 364.41,312.02 364.89,307.57 365.37,302.88 365.85,297.97 366.33,292.84 366.81,287.51 367.29,281.98 367.77,276.27 368.25,270.39 368.73,264.35 369.21,258.16 369.69,251.84 370.17,245.39 370.64,238.83 371.12,232.18 371.6,225.44 372.08,218.64 372.56,211.78 373.04,204.87 373.52,197.94 374,191 374.48,184.05 374.96,177.12 375.44,170.22 375.92,163.36 376.4,156.55 376.88,149.82 377.35,143.16 377.83,136.61 378.31,130.16 378.79,123.83 379.27,117.64 379.75,111.6 380.23,105.72 380.71,100.01 381.19,94.48 381.67,89.15 382.15,84.02 382.63,79.11 383.11,74.43 383.59,69.97 384.06,65.77 384.54,61.81 385.02,58.11 385.5,54.69 385.98,51.53 386.46,48.66 386.94,46.07 387.42,43.78 387.9,41.78 388.38,40.08 388.86,38.69 389.34,37.6 389.82,36.83 390.3,36.36 390.77,36.2 391.25,36.36 391.73,36.83 392.21,37.6 392.69,38.69 393.17,40.08 393.65,41.78 394.13,43.78 394.61,46.07 395.09,48.66 395.57,51.53 396.05,54.69 396.53,58.11 397.01,61.81 397.48,65.77 397.96,69.97 398.44,74.43 398.92,79.11 399.4,84.02 399.88,89.15 400.36,94.48 400.84,100.01 401.32,105.72 401.8,111.6 402.28,117.64 402.76,123.83 403.24,130.16 403.72,136.61 404.19,143.16 404.67,149.82 405.15,156.55 405.63,163.36 406.11,170.22 406.59,177.12 407.07,184.05 407.55,191 408.03,197.94 408.51,204.87 408.99,211.78 409.47,218.64 409.95,225.44 410.43,232.18 410.9,238.83 411.38,245.39 411.86,251.84 412.34,258.16 412.82,264.35 413.3,270.39 413.78,276.27 414.26,281.98 414.74,287.51 415.22,292.84 415.7,297.97 416.18,302.88 416.66,307.57 417.14,312.02 417.62,316.23 418.09,320.19 418.57,323.88 419.05,327.31 419.53,330.46 420.01,333.34 420.49,335.92 420.97,338.22 421.45,340.21 421.93,341.91 422.41,343.31 422.89,344.39 423.37,345.17 423.85,345.64 424.32,345.79 424.8,345.64 425.28,345.17 425.76,344.39 426.24,343.31 426.72,341.91 427.2,340.21 427.68,338.22 428.16,335.92 428.64,333.34 429.12,330.46 429.6,327.31 430.08,323.88 430.56,320.19 431.03,316.23 431.51,312.02 431.99,307.57 432.47,302.88 432.95,297.97 433.43,292.84 433.91,287.51 434.39,281.98 434.87,276.27 435.35,270.39 435.83,264.35 436.31,258.16 436.79,251.84 437.27,245.39 437.75,238.83 438.22,232.18 438.7,225.44 439.18,218.64 439.66,211.78 440.14,204.87 440.62,197.94 441.1,191 441.58,184.05 442.06,177.12 442.54,170.22 443.02,163.36 443.5,156.55 443.98,149.82 444.45,143.16 444.93,136.61 445.41,130.16 445.89,123.83 446.37,117.64 446.85,111.6 447.33,105.72 447.81,100.01 448.29,94.48 448.77,89.15 449.25,84.02 449.73,79.11 450.21,74.43 450.69,69.97 451.16,65.77 451.64,61.81 452.12,58.11 452.6,54.69 453.08,51.53 453.56,48.66 454.04,46.07 454.52,43.78 455,41.78 455.48,40.08 455.96,38.69 456.44,37.6 456.92,36.83 457.4,36.36 457.87,36.2 458.35,36.36 458.83,36.83 459.31,37.6 459.79,38.69 460.27,40.08 460.75,41.78 461.23,43.78 461.71,46.07 462.19,48.66 462.67,51.53 463.15,54.69 463.63,58.11 464.11,61.81 464.58,65.77 465.06,69.97 465.54,74.43 466.02,79.11 466.5,84.02 466.98,89.15 467.46,94.48 467.94,100.01 468.42,105.72 468.9,111.6 469.38,117.64 469.86,123.83 470.34,130.16 470.82,136.61 471.29,143.16 471.77,149.82 472.25,156.55 472.73,163.36 473.21,170.22 473.69,177.12 474.17,184.05 474.65,191 475.13,197.94 475.61,204.87 476.09,211.78 476.57,218.64 477.05,225.44 477.53,232.18 478,238.83 478.48,245.39 478.96,251.84 479.44,258.16 479.92,264.35 480.4,270.39 480.88,276.27 481.36,281.98 481.84,287.51 482.32,292.84 482.8,297.97 483.28,302.88 483.76,307.57 484.24,312.02 484.71,316.23 485.19,320.19 485.67,323.88 486.15,327.31 486.63,330.46 487.11,333.34 487.59,335.92 488.07,338.22 488.55,340.21 489.03,341.91 489.51,343.31 489.99,344.39 490.47,345.17 490.95,345.64 491.42,345.79 491.9,345.64 492.38,345.17 492.86,344.39 493.34,343.31 493.82,341.91 494.3,340.21 494.78,338.22 495.26,335.92 495.74,333.34 496.22,330.46 496.7,327.31 497.18,323.88 497.66,320.19 498.13,316.23 498.61,312.02 499.09,307.57 499.57,302.88 500.05,297.97 500.53,292.84 501.01,287.51 501.49,281.98 501.97,276.27 502.45,270.39 502.93,264.35 503.41,258.16 503.89,251.84 504.37,245.39 504.84,238.83 505.32,232.18 505.8,225.44 506.28,218.64 506.76,211.78 507.24,204.87 507.72,197.94 508.2,191 508.68,184.05 509.16,177.12 509.64,170.22 510.12,163.36 510.6,156.55 511.08,149.82 511.55,143.16 512.03,136.61 512.51,130.16 512.99,123.83 513.47,117.64 513.95,111.6 514.43,105.72 514.91,100.01 515.39,94.48 515.87,89.15 516.35,84.02 516.83,79.11 517.31,74.43 517.79,69.97 518.26,65.77 518.74,61.81 519.22,58.11 519.7,54.69 520.18,51.53 520.66,48.66 521.14,46.07 521.62,43.78 522.1,41.78 522.58,40.08 523.06,38.69 523.54,37.6 524.02,36.83 524.5,36.36 524.97,36.2 525.45,36.36 525.93,36.83 526.41,37.6 526.89,38.69 527.37,40.08 527.85,41.78 528.33,43.78 528.81,46.07 529.29,48.66 529.77,51.53 530.25,54.69 530.73,58.11 531.21,61.81 531.68,65.77 532.16,69.97 532.64,74.43 533.12,79.11 533.6,84.02 534.08,89.15 534.56,94.48 535.04,100.01 535.52,105.72 536,111.6 536.48,117.64 536.96,123.83 537.44,130.16 537.92,136.61 538.39,143.16 538.87,149.82 539.35,156.55 539.83,163.36 540.31,170.22 540.79,177.12 541.27,184.05 541.75,191 542.23,197.94 542.71,204.87 543.19,211.78 543.67,218.64 544.15,225.44 544.63,232.18 545.11,238.83 545.58,245.39 546.06,251.84 546.54,258.16 547.02,264.35 547.5,270.39 547.98,276.27 548.46,281.98 548.94,287.51 549.42,292.84 549.9,297.97 550.38,302.88 550.86,307.57 551.34,312.02 551.81,316.23 552.29,320.19 552.77,323.88 553.25,327.31 553.73,330.46 554.21,333.34 554.69,335.92 555.17,338.22 555.65,340.21 556.13,341.91 556.61,343.31 557.09,344.39 557.57,345.17 558.05,345.64 558.52,345.79 559,345.64 559.48,345.17 559.96,344.39 560.44,343.31 560.92,341.91 561.4,340.21 561.88,338.22 562.36,335.92 562.84,333.34 563.32,330.46 563.8,327.31 564.28,323.88 564.76,320.19 565.23,316.23 565.71,312.02 566.19,307.57 566.67,302.88 567.15,297.97 567.63,292.84 568.11,287.51 568.59,281.98 569.07,276.27 569.55,270.39 570.03,264.35 570.51,258.16 570.99,251.84 571.47,245.39 571.94,238.83 572.42,232.18 572.9,225.44 573.38,218.64 573.86,211.78 574.34,204.87 574.82,197.94 575.3,191 575.78,184.05 576.26,177.12 576.74,170.22 577.22,163.36 577.7,156.55 578.18,149.82 578.65,143.16 579.13,136.61 579.61,130.16 580.09,123.83 580.57,117.64 581.05,111.6 581.53,105.72 582.01,100.01 582.49,94.48 582.97,89.15 583.45,84.02 583.93,79.11 584.41,74.43 584.89,69.97 585.37,65.77 585.84,61.81 586.32,58.11 586.8,54.69 587.28,51.53 587.76,48.66 588.24,46.07 588.72,43.78 589.2,41.78 589.68,40.08 590.16,38.69 590.64,37.6 591.12,36.83 591.6,36.36 592.07,36.2 592.55,36.36 593.03,36.83 593.51,37.6 593.99,38.69 594.47,40.08 594.95,41.78 595.43,43.78 595.91,46.07 596.39,48.66 596.87,51.53 597.35,54.69 597.83,58.11 598.31,61.81 598.78,65.77 599.26,69.97 599.74,74.43 600.22,79.11 600.7,84.02 601.18,89.15 601.66,94.48 602.14,100.01 602.62,105.72 603.1,111.6 603.58,117.64 604.06,123.83 604.54,130.16 605.02,136.61 605.49,143.16 605.97,149.82 606.45,156.55 606.93,163.36 607.41,170.22 607.89,177.12 608.37,184.05 608.85,191 609.33,197.94 609.81,204.87 610.29,211.78 610.77,218.64 611.25,225.44 611.73,232.18 612.21,238.83 612.68,245.39 613.16,251.84 613.64,258.16 614.12,264.35 614.6,270.39 615.08,276.27 615.56,281.98 616.04,287.51 616.52,292.84 617,297.97 617.48,302.88 617.96,307.57 618.44,312.02 618.91,316.23 619.39,320.19 619.87,323.88 620.35,327.31 620.83,330.46 621.31,333.34 621.79,335.92 622.27,338.22 622.75,340.21 623.23,341.91 623.71,343.31 624.19,344.39 624.67,345.17 625.15,345.64 625.62,345.79 626.1,345.64 626.58,345.17 627.06,344.39 627.54,343.31 628.02,341.91 628.5,340.21 628.98,338.22 629.46,335.92 629.94,333.34 630.42,330.46 630.9,327.31 631.38,323.88 631.86,320.19 632.33,316.23 632.81,312.02 633.29,307.57 633.77,302.88 634.25,297.97 634.73,292.84 635.21,287.51 635.69,281.98 636.17,276.27 636.65,270.39 637.13,264.35 637.61,258.16 638.09,251.84 638.57,245.39 639.04,238.83 639.52,232.18 640,225.44 640.48,218.64 640.96,211.78 641.44,204.87 641.92,197.94 642.4,191 642.88,184.05 643.36,177.12 643.84,170.22 644.32,163.36 644.8,156.55 645.28,149.82 645.75,143.16 646.23,136.61 646.71,130.16 647.19,123.83 647.67,117.64 648.15,111.6 648.63,105.72 649.11,100.01 649.59,94.48 650.07,89.15 650.55,84.02 651.03,79.11 651.51,74.43 651.99,69.97 652.46,65.77 652.94,61.81 653.42,58.11 653.9,54.69 654.38,51.53 654.86,48.66 655.34,46.07 655.82,43.78 656.3,41.78 656.78,40.08 657.26,38.69 657.74,37.6 658.22,36.83 658.7,36.36 659.17,36.2 659.65,36.36 660.13,36.83 660.61,37.6 661.09,38.69 661.57,40.08 662.05,41.78 662.53,43.78 663.01,46.07 663.49,48.66 663.97,51.53 664.45,54.69 664.93,58.11 665.41,61.81 665.88,65.77 666.36,69.97 666.84,74.43 667.32,79.11 667.8,84.02 668.28,89.15 668.76,94.48 669.24,100.01 669.72,105.72 670.2,111.6 670.68,117.64 671.16,123.83 671.64,130.16 672.12,136.61 672.59,143.16 673.07,149.82 673.55,156.55 674.03,163.36 674.51,170.22 674.99,177.12 675.47,184.05 675.95,191 676.43,197.94 676.91,204.87 677.39,211.78 677.87,218.64 678.35,225.44 678.83,232.18 679.3,238.83 679.78,245.39 680.26,251.84 680.74,258.16 681.22,264.35 681.7,270.39 682.18,276.27 682.66,281.98 683.14,287.51 683.62,292.84 684.1,297.97 684.58,302.88 685.06,307.57 685.54,312.02 686.01,316.23 686.49,320.19 686.97,323.88 687.45,327.31 687.93,330.46 688.41,333.34 688.89,335.92 689.37,338.22 689.85,340.21 690.33,341.91 690.81,343.31 691.29,344.39 691.77,345.17 692.25,345.64 692.72,345.79 693.2,345.64 693.68,345.17 694.16,344.39 694.64,343.31 695.12,341.91 695.6,340.21 696.08,338.22 696.56,335.92 697.04,333.34 697.52,330.46 698,327.31 698.48,323.88 698.96,320.19 699.43,316.23 699.91,312.02 700.39,307.57 700.87,302.88 701.35,297.97 701.83,292.84 702.31,287.51 702.79,281.98 703.27,276.27 703.75,270.39 704.23,264.35 704.71,258.16 705.19,251.84 705.67,245.39 706.14,238.83 706.62,232.18 707.1,225.44 707.58,218.64 708.06,211.78 708.54,204.87 709.02,197.94 709.5,191" stroke="#ff0000" stroke-width="1.2" fill="none" stroke-linejoin="round"/>
<path d="M38 34.5H709.5" stroke="#0000ff" stroke-width="1" shape-rendering="crispEdges"/>
<text class="m" transform="translate(357.8 10.6) scale(1.646 1)" text-anchor="middle" style="letter-spacing:0;fill:#000">ANALOGUE ANALYSIS</text>
<text class="m cy" x="36.4" y="23.9" text-anchor="end">3.50</text>
<text class="m cy" x="36.4" y="66.9" text-anchor="end">3.00</text>
<text class="m cy" x="36.4" y="113.9" text-anchor="end">2.50</text>
<text class="m cy" x="36.4" y="161.9" text-anchor="end">2.00</text>
<text class="m cy" x="36.4" y="208.9" text-anchor="end">1.50</text>
<text class="m cy" x="36.4" y="255.9" text-anchor="end">1.00</text>
<text class="m cy" x="36.4" y="303.9" text-anchor="end">500m</text>
<text class="m cy" x="36.4" y="350.9" text-anchor="end">0.00</text>
<text class="m cy" x="36.4" y="394" text-anchor="end">-500m</text>
<text class="m cy" x="37.8" y="403.9" text-anchor="start">0.00</text>
<text class="m cy" x="104.7" y="403.9" text-anchor="middle">1.00m</text>
<text class="m cy" x="171.7" y="403.9" text-anchor="middle">2.00m</text>
<text class="m cy" x="238.7" y="403.9" text-anchor="middle">3.00m</text>
<text class="m cy" x="306.7" y="403.9" text-anchor="middle">4.00m</text>
<text class="m cy" x="372.7" y="403.9" text-anchor="middle">5.00m</text>
<text class="m cy" x="439.7" y="403.9" text-anchor="middle">6.00m</text>
<text class="m cy" x="506.7" y="403.9" text-anchor="middle">7.00m</text>
<text class="m cy" x="573.7" y="403.9" text-anchor="middle">8.00m</text>
<text class="m cy" x="641.7" y="403.9" text-anchor="middle">9.00m</text>
<text class="m cy" x="708.6" y="403.9" text-anchor="end">10.0m</text>
<text class="m" x="43.8" y="23.9" style="fill:#00ff00;stroke:#00ff00">Generator</text>
<text class="m" x="43.8" y="33.8" style="fill:#ff0000;stroke:#ff0000">Out</text>
<text class="m" x="43.8" y="43.9" style="fill:#0000ff;stroke:#0000ff">DC</text>
</g>
<g id="schematic">
<g shape-rendering="crispEdges">
<path class="w" d="M526 584L629 584M570 584L570 934L1226 934L1226 686L1241 686M687 584L963 584M730 438L730 424L1065 424M730 511L730 657M730 730L730 905L1197 905L1197 526M1007 395L1007 540M1007 657L1007 977M1153 424L1197 424L1197 438M1080 598L1241 598M1109 569L1109 700L993 700M920 700L890 700M963 613L890 613L890 730M890 803L890 817M890 875L890 905"/>
<path class="w" d="M992 978H1023M1000 985H1015M1005 992H1009"/>
<rect x="568" y="582" width="5" height="5" fill="#003800"/>
<rect x="728" y="582" width="5" height="5" fill="#003800"/>
<rect x="1005" y="422" width="5" height="5" fill="#003800"/>
<rect x="1107" y="596" width="5" height="5" fill="#003800"/>
<rect x="888" y="698" width="5" height="5" fill="#003800"/>
<rect x="888" y="903" width="5" height="5" fill="#003800"/>
<rect x="1005" y="903" width="5" height="5" fill="#003800"/>
<path class="p" d="M629 584L645 584M669 584L687 584M730 438L730 453M730 496L730 511M730 657L730 671M730 715L730 730M920 700L934 700M978 700L993 700M890 730L890 744M890 788L890 803M890 817L890 835M890 858L890 875M963 584L993 584M963 613L993 613M1051 598L1080 598M1007 540L1007 572M1007 625L1007 657M1065 424L1080 424M1138 424L1153 424M1197 438L1197 453M1197 511L1197 526M1241 598L1270 598M1241 627L1270 627M1241 657L1270 657M1241 686L1270 686"/>
<rect class="b" x="725" y="453" width="10" height="43"/>
<rect class="b" x="725" y="671" width="10" height="44"/>
<rect class="b" x="884" y="744" width="12" height="44"/>
<rect class="b" x="934" y="694" width="44" height="12"/>
<rect class="b" x="646" y="569" width="7" height="29"/>
<rect class="b" x="662" y="569" width="7" height="29" style="fill:url(#hatch)"/>
<rect class="b" x="876" y="835" width="29" height="7" style="fill:url(#hatch2)"/>
<rect class="b" x="876" y="851" width="29" height="7"/>
<rect class="b" x="1270" y="584" width="131" height="116"/>
<rect x="1306" y="605" width="82" height="74" fill="#000"/>
<path d="M1307 606h6v6h-6zM1307 613h6v7h-6zM1307 621h6v6h-6zM1307 628h6v6h-6zM1307 635h6v6h-6zM1307 642h6v7h-6zM1307 650h6v6h-6zM1307 657h6v6h-6zM1307 664h6v7h-6zM1307 672h6v6h-6zM1314 606h7v6h-7zM1314 613h7v7h-7zM1314 621h7v6h-7zM1314 628h7v6h-7zM1314 635h7v6h-7zM1314 642h7v7h-7zM1314 650h7v6h-7zM1314 657h7v6h-7zM1314 664h7v7h-7zM1314 672h7v6h-7zM1322 606h6v6h-6zM1322 613h6v7h-6zM1322 621h6v6h-6zM1322 628h6v6h-6zM1322 635h6v6h-6zM1322 642h6v7h-6zM1322 650h6v6h-6zM1322 657h6v6h-6zM1322 664h6v7h-6zM1322 672h6v6h-6zM1329 606h6v6h-6zM1329 613h6v7h-6zM1329 621h6v6h-6zM1329 628h6v6h-6zM1329 635h6v6h-6zM1329 642h6v7h-6zM1329 650h6v6h-6zM1329 657h6v6h-6zM1329 664h6v7h-6zM1329 672h6v6h-6zM1336 606h7v6h-7zM1336 613h7v7h-7zM1336 621h7v6h-7zM1336 628h7v6h-7zM1336 635h7v6h-7zM1336 642h7v7h-7zM1336 650h7v6h-7zM1336 657h7v6h-7zM1336 664h7v7h-7zM1336 672h7v6h-7zM1344 606h6v6h-6zM1344 613h6v7h-6zM1344 621h6v6h-6zM1344 628h6v6h-6zM1344 635h6v6h-6zM1344 642h6v7h-6zM1344 650h6v6h-6zM1344 657h6v6h-6zM1344 664h6v7h-6zM1344 672h6v6h-6zM1351 606h6v6h-6zM1351 613h6v7h-6zM1351 621h6v6h-6zM1351 628h6v6h-6zM1351 635h6v6h-6zM1351 642h6v7h-6zM1351 650h6v6h-6zM1351 657h6v6h-6zM1351 664h6v7h-6zM1351 672h6v6h-6zM1358 606h6v6h-6zM1358 613h6v7h-6zM1358 621h6v6h-6zM1358 628h6v6h-6zM1358 635h6v6h-6zM1358 642h6v7h-6zM1358 650h6v6h-6zM1358 657h6v6h-6zM1358 664h6v7h-6zM1358 672h6v6h-6zM1365 606h7v6h-7zM1365 613h7v7h-7zM1365 621h7v6h-7zM1365 628h7v6h-7zM1365 635h7v6h-7zM1365 642h7v7h-7zM1365 650h7v6h-7zM1365 657h7v6h-7zM1365 664h7v7h-7zM1365 672h7v6h-7zM1373 606h6v6h-6zM1373 613h6v7h-6zM1373 621h6v6h-6zM1373 628h6v6h-6zM1373 635h6v6h-6zM1373 642h6v7h-6zM1373 650h6v6h-6zM1373 657h6v6h-6zM1373 664h6v7h-6zM1373 672h6v6h-6zM1380 606h6v6h-6zM1380 613h6v7h-6zM1380 621h6v6h-6zM1380 628h6v6h-6zM1380 635h6v6h-6zM1380 642h6v7h-6zM1380 650h6v6h-6zM1380 657h6v6h-6zM1380 664h6v7h-6zM1380 672h6v6h-6z" fill="#003200"/>
</g>
<circle class="pr" cx="730" cy="511.5" r="5"/><path class="pr" d="M722.5 511.5H737.5"/>
<path class="b" d="M992 562.6L1050.5 598L992 634.6Z" stroke-linejoin="miter"/>
<path d="M999.5 584h9M1004 579.5v9M999.5 613h9" stroke="#800000" stroke-width="2" fill="none" shape-rendering="crispEdges"/>
<circle class="b" cx="1109.7" cy="424" r="28.6"/>
<rect x="1089.7" y="412.6" width="40.6" height="14.8" fill="#004000" stroke="#10f010" stroke-width="1.3"/>
<text x="1109.9" y="425.2" text-anchor="middle" style="fill:#009800;font-size:13.5px;letter-spacing:0" textLength="30" lengthAdjust="spacingAndGlyphs">+88.8</text>
<text class="mt" x="1109.7" y="442" text-anchor="middle">Amps</text>
<path d="M1067 414.6h7M1070.5 411.1v7" stroke="#800000" stroke-width="1.1" fill="none"/>
<path d="M1145.3 415.5h7" stroke="#800000" stroke-width="1.1" fill="none"/>
<circle class="b" cx="1197.3" cy="482" r="28.6"/>
<rect x="1176.6" y="471.5" width="40.6" height="14.8" fill="#004000" stroke="#10f010" stroke-width="1.3"/>
<text x="1196.8" y="484.1" text-anchor="middle" style="fill:#009800;font-size:13.5px;letter-spacing:0" textLength="30" lengthAdjust="spacingAndGlyphs">+88.8</text>
<text class="mt" x="1197.3" y="500" text-anchor="middle">Volts</text>
<path d="M1185 443.6h7M1188.5 440.1v7" stroke="#800000" stroke-width="1.1" fill="none"/>
<path d="M1185 521.4h7" stroke="#800000" stroke-width="1.1" fill="none"/>
<svg x="1306" y="605" width="82" height="74" viewBox="1306 605 82 74">
<path d="M1306 620H1313.8V611H1320.95V620H1328.37V611H1335.52V620H1342.94V611H1350.09V620H1357.51V611H1364.66V620H1372.08V611H1379.23V620H1388" stroke="#ffff00" stroke-width="2" fill="none"/>
<path d="M1306 637.3L1308.2 637.9L1314.8 629.7L1320.62 637.9L1326.43 629.7L1332.25 637.9L1338.06 629.7L1343.88 637.9L1349.69 629.7L1355.51 637.9L1361.32 629.7L1367.14 637.9L1372.95 629.7L1378.77 637.9L1384.58 629.7L1390.4 637.9L1396.21 629.7" stroke="#0000ff" stroke-width="2.1" fill="none" stroke-linejoin="bevel"/>
<path d="M1306 657H1313.8V648H1320.95V657H1328.37V648H1335.52V657H1342.94V648H1350.09V657H1357.51V648H1364.66V657H1372.08V648H1379.23V657H1388" stroke="#ff0000" stroke-width="2" fill="none"/>
<polyline points="1305,669.66 1305.7,668.77 1306.4,667.81 1307.1,666.91 1307.8,666.21 1308.5,665.79 1309.2,665.71 1309.9,665.99 1310.6,666.58 1311.3,667.41 1312,668.36 1312.7,669.29 1313.4,670.1 1314.1,670.66 1314.8,670.89 1315.5,670.78 1316.2,670.32 1316.9,669.59 1317.6,668.68 1318.3,667.73 1319,666.84 1319.7,666.16 1320.4,665.77 1321.1,665.72 1321.8,666.03 1322.5,666.65 1323.2,667.49 1323.9,668.44 1324.6,669.37 1325.3,670.16 1326,670.69 1326.7,670.9 1327.4,670.75 1328.1,670.27 1328.8,669.52 1329.5,668.6 1330.2,667.64 1330.9,666.78 1331.6,666.12 1332.3,665.75 1333,665.74 1333.7,666.07 1334.4,666.71 1335.1,667.57 1335.8,668.52 1336.5,669.45 1337.2,670.21 1337.9,670.72 1338.6,670.9 1339.3,670.72 1340,670.21 1340.7,669.45 1341.4,668.52 1342.1,667.57 1342.8,666.71 1343.5,666.07 1344.2,665.74 1344.9,665.75 1345.6,666.12 1346.3,666.78 1347,667.64 1347.7,668.6 1348.4,669.52 1349.1,670.27 1349.8,670.75 1350.5,670.9 1351.2,670.69 1351.9,670.16 1352.6,669.37 1353.3,668.44 1354,667.49 1354.7,666.65 1355.4,666.03 1356.1,665.72 1356.8,665.77 1357.5,666.16 1358.2,666.84 1358.9,667.73 1359.6,668.68 1360.3,669.59 1361,670.32 1361.7,670.78 1362.4,670.89 1363.1,670.66 1363.8,670.1 1364.5,669.29 1365.2,668.36 1365.9,667.41 1366.6,666.58 1367.3,665.99 1368,665.71 1368.7,665.79 1369.4,666.21 1370.1,666.91 1370.8,667.81 1371.5,668.77 1372.2,669.66 1372.9,670.37 1373.6,670.8 1374.3,670.89 1375,670.62 1375.7,670.04 1376.4,669.22 1377.1,668.27 1377.8,667.33 1378.5,666.52 1379.2,665.95 1379.9,665.71 1380.6,665.81 1381.3,666.26 1382,666.98 1382.7,667.89 1383.4,668.85 1384.1,669.73 1384.8,670.42 1385.5,670.82 1386.2,670.88 1386.9,670.58 1387.6,669.98 1388.3,669.14" stroke="#00ff00" stroke-width="2.1" fill="none"/>
</svg>
<path class="pr" d="M526.5 584.5L518.2 575.8L511.3 562.5L504.1 569.5L518.2 575.8"/>
<path class="pr" d="M1007.5 395.5L999.2 386.8L992.3 373.5L985.1 380.5L999.2 386.8"/>
<path class="pr" d="M526.3 571.1a7.3 7.4 0 0 1 14.6 0a7.3 7.4 0 0 0 14.6 0"/>
<path class="pr" d="M1007.3 382.5h26.5" stroke-dasharray="4.2 1.4"/><path class="pr" d="M1007.3 386.5h26.5"/>
<path class="pr" d="M1109 569.5L1120 558.3M1131.3 547.5L1116 554.4L1123.8 562.6Z"/>
<text class="ref rb" x="744.4" y="468.5">R4</text>
<text transform="translate(744.4 485.6) scale(0.913 1)">10k</text>
<text class="tx" transform="translate(744.9 499.7) scale(0.9 1)">&lt;TEXT&gt;</text>
<text class="ref rb" x="744.6" y="686.2">R5</text>
<text transform="translate(744.6 703.6) scale(0.913 1)">10k</text>
<text class="tx" transform="translate(745.1 717.3) scale(0.9 1)">&lt;TEXT&gt;</text>
<text class="ref rb" x="904.9" y="758.8">R3</text>
<text transform="translate(904.9 776.3) scale(0.913 1)">2.5k</text>
<text class="tx" transform="translate(905.4 790.3) scale(0.9 1)">&lt;TEXT&gt;</text>
<text class="ref rb" x="933.8" y="689.6">R1</text>
<text transform="translate(933.8 718.4) scale(0.913 1)">10k</text>
<text class="tx" transform="translate(934.3 733.3) scale(0.9 1)">&lt;TEXT&gt;</text>
<text class="ref" x="642.6" y="564.2">C1</text>
<text transform="translate(642.6 610.5) scale(0.913 1)">47u</text>
<text class="tx" transform="translate(643.1 625.8) scale(0.9 1)">&lt;TEXT&gt;</text>
<text class="ref" x="913.9" y="847.3">C2</text>
<text transform="translate(913.9 863.7) scale(0.913 1)">20u</text>
<text class="tx" transform="translate(914.4 878.5) scale(0.9 1)">&lt;TEXT&gt;</text>
<text class="pn" x="971.3" y="581.6">3</text><text class="pn" x="971.3" y="611">2</text><text class="pn" x="1065.2" y="597.2">1</text>
<text class="pn" transform="translate(1004.6 553.2) rotate(-90)">8</text><text class="pn" transform="translate(1004.6 648.6) rotate(-90)">4</text>
<text class="ref" x="1052.3" y="542">U1:A</text>
<text transform="translate(1052.2 661) scale(0.913 1)">AD8542S</text>
<text class="tx" transform="translate(1053.3 675.8) scale(0.9 1)">&lt;TEXT&gt;</text>
<text transform="translate(1277 602.9) scale(0.913 1)">A</text>
<text transform="translate(1277 632) scale(0.913 1)">B</text>
<text transform="translate(1277 662) scale(0.913 1)">C</text>
<text transform="translate(1277 690.7) scale(0.913 1)">D</text>
<text class="bl" transform="translate(1138.6 552.1) scale(0.913 1)">Out</text>
<text class="bl" transform="translate(500.8 566.6) scale(0.913 1)" text-anchor="end">Generator</text>
<text transform="translate(499.8 581) scale(0.913 1)" text-anchor="end">FREQ=1k</text>
<text transform="translate(499.8 595.45) scale(0.913 1)" text-anchor="end">TD=0</text>
<text transform="translate(499.8 609.9) scale(0.913 1)" text-anchor="end">AMP=330m</text>
<text transform="translate(499.8 624.35) scale(0.913 1)" text-anchor="end">OFFSET=0</text>
<text transform="translate(499.8 638.8) scale(0.913 1)" text-anchor="end">THETA=0</text>
<text class="bl" transform="translate(981.5 378.1) scale(0.913 1)" text-anchor="end">DC Uin</text>
<text transform="translate(979.8 391.5) scale(0.913 1)" text-anchor="end">VALUE=3.3</text>
</g>
</svg></body></html>
